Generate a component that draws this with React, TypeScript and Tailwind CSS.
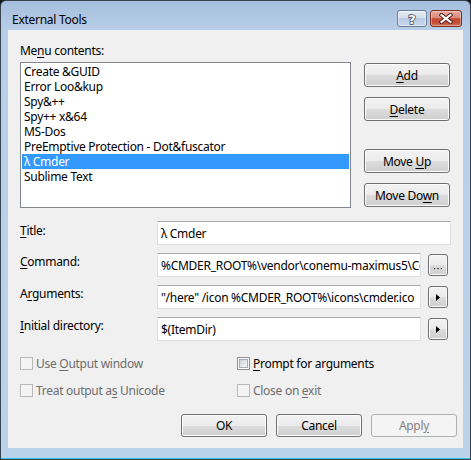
import React from "react";

function U({ children }: { children: React.ReactNode }) {
  return <span className="underline decoration-1 underline-offset-[2px]">{children}</span>;
}

function Btn({ children, className = "" }: { children: React.ReactNode; className?: string }) {
  return (
    <div
      className={
        "flex items-center justify-center rounded-[3px] border border-[#707070] bg-[linear-gradient(to_bottom,#f2f2f2_0%,#ebebeb_50%,#dddddd_50%,#cfcfcf_100%)] shadow-[inset_0_0_0_1px_#fbfbfb] text-black " +
        className
      }
    >
      <span className="whitespace-pre">{children}</span>
    </div>
  );
}

function CheckBox({ enabled, children }: { enabled: boolean; children: React.ReactNode }) {
  return (
    <div className="flex h-[15px] items-center gap-[3px]">
      {enabled ? (
        <div className="h-[13px] w-[13px] border border-[#8e8f8f] bg-[#fcfcfc] p-[1px]">
          <div className="h-full w-full border border-[#a8acb1] bg-[linear-gradient(135deg,#cfd2d6_0%,#e9eaec_60%,#f6f6f6_100%)]" />
        </div>
      ) : (
        <div className="h-[13px] w-[13px] border border-[#b9b9b9] bg-[#f4f4f4]" />
      )}
      <span className={enabled ? "text-black" : "text-[#6d6d6d]"}>{children}</span>
    </div>
  );
}

function Input({ value, className = "" }: { value: string; className?: string }) {
  return (
    <div
      className={
        "flex h-[24px] items-center overflow-hidden whitespace-nowrap border border-[#dfe1e6] border-t-[#abadb3] bg-white pl-[3px] " +
        className
      }
    >
      {value}
    </div>
  );
}

function Arrow() {
  return (
    <svg width="4" height="7" viewBox="0 0 4 7" className="block">
      <polygon points="0,0 4,3.5 0,7" fill="#000" />
    </svg>
  );
}

const items = [
  "Create &GUID",
  "Error Loo&kup",
  "Spy&++",
  "Spy++ x&64",
  "MS-Dos",
  "PreEmptive Protection - Dot&fuscator",
  "λ Cmder",
  "Sublime Text",
];

export default function App() {
  return (
    <div className="h-[460px] w-[471px] bg-[#111417] font-['Segoe_UI','Noto_Sans',sans-serif] text-[12px] leading-[15px] tracking-[-0.28px] text-black">
      <div className="flex h-full w-full flex-col rounded-t-[6px] border border-[#3a4450] bg-[linear-gradient(to_bottom,#a5bedc_0px,#b8cfe9_30px,#bbd2eb_100%)]">
        {/* Title bar */}
        <div className="flex h-[29px] items-start">
          <span className="ml-[11px] mt-[11px]">External Tools</span>
          <div className="ml-auto mr-[8px] mt-[9px] flex gap-[3px]">
            <div className="flex h-[17px] w-[30px] items-center justify-center rounded-[3px] border border-[#6b7d96] bg-[linear-gradient(to_bottom,#e4edf7_0%,#d2deec_45%,#bccde3_50%,#c6d7ec_100%)] shadow-[inset_0_0_0_1px_rgba(255,255,255,0.5)]">
              <svg width="12" height="14" viewBox="0 0 12 14">
                <text
                  x="6"
                  y="12"
                  textAnchor="middle"
                  fontFamily="DejaVu Sans, sans-serif"
                  fontWeight="bold"
                  fontSize="13"
                  fill="#fff"
                  stroke="#3d4a5c"
                  strokeWidth="1.6"
                  paintOrder="stroke"
                >
                  ?
                </text>
              </svg>
            </div>
            <div className="flex h-[17px] w-[32px] items-center justify-center rounded-[3px] border border-[#7d2c22] bg-[linear-gradient(to_bottom,#e9a99b_0%,#d98a7a_45%,#c5452f_52%,#c8503a_80%,#d7785c_100%)] shadow-[inset_0_0_0_1px_rgba(255,255,255,0.35)]">
              <svg width="14" height="11" viewBox="0 0 14 11">
                <path d="M2.5 2 L11.5 9 M11.5 2 L2.5 9" stroke="#4a1a14" strokeWidth="4" strokeLinecap="square" />
                <path d="M2.5 2 L11.5 9 M11.5 2 L2.5 9" stroke="#ffffff" strokeWidth="2.2" strokeLinecap="square" />
              </svg>
            </div>
          </div>
        </div>

        {/* Client area */}
        <div className="mx-[7px] flex h-[418px] flex-col bg-[#f0f0f0] pl-[12px]">
          <div className="mt-[13px]">
            Me<U>n</U>u contents:
          </div>

          <div className="mt-[4px] flex">
            <div className="h-[146px] w-[331px] border border-[#828790] bg-white p-[1px]">
              {items.map((it) => (
                <div
                  key={it}
                  className={
                    "h-[15px] whitespace-nowrap px-[2px] leading-[15px] " +
                    (it === "λ Cmder" ? "bg-[#3399ff] text-white" : "")
                  }
                >
                  {it}
                </div>
              ))}
            </div>
            <div className="ml-[13px] flex w-[86px] flex-col pt-[1px]">
              <Btn className="h-[24px]">
                <U>A</U>dd
              </Btn>
              <Btn className="mt-[10px] h-[24px]">
                <U>D</U>elete
              </Btn>
              <Btn className="mt-[28px] h-[24px]">
                Move <U>U</U>p
              </Btn>
              <Btn className="mt-[10px] h-[24px]">
                Move Do<U>w</U>n
              </Btn>
            </div>
          </div>

          <div className="mt-[13px] flex flex-col gap-[8px]">
            <div className="flex h-[24px]">
              <div className="w-[137px] pt-[2px]">
                <U>T</U>itle:
              </div>
              <Input value="λ Cmder" className="w-[294px]" />
            </div>
            <div className="flex h-[24px]">
              <div className="w-[137px] pt-[1px]">
                <U>C</U>ommand:
              </div>
              <Input value="%CMDER_ROOT%\vendor\conemu-maximus5\ConEmu.exe" className="w-[264px]" />
              <div className="ml-[7px] mt-[1px] flex h-[22px] w-[20px] items-end justify-center rounded-[3px] border border-[#707070] bg-[linear-gradient(to_bottom,#f2f2f2_0%,#ebebeb_50%,#dddddd_50%,#cfcfcf_100%)] pb-[5px] shadow-[inset_0_0_0_1px_#fbfbfb]">
                <svg width="8" height="2" viewBox="0 0 8 2" className="block">
                  <rect x="0" y="0" width="1.2" height="1.2" fill="#000" />
                  <rect x="3.4" y="0" width="1.2" height="1.2" fill="#000" />
                  <rect x="6.8" y="0" width="1.2" height="1.2" fill="#000" />
                </svg>
              </div>
            </div>
            <div className="flex h-[24px]">
              <div className="w-[137px] pt-[1px]">
                A<U>r</U>guments:
              </div>
              <Input value={'"/here" /icon %CMDER_ROOT%\\icons\\cmder.ico'} className="w-[264px]" />
              <Btn className="ml-[7px] mt-[1px] h-[22px] w-[20px]">
                <Arrow />
              </Btn>
            </div>
            <div className="flex h-[24px]">
              <div className="w-[137px] pt-[1px]">
                <U>I</U>nitial directory:
              </div>
              <Input value="$(ItemDir)" className="w-[264px]" />
              <Btn className="ml-[7px] mt-[1px] h-[22px] w-[20px]">
                <Arrow />
              </Btn>
            </div>
          </div>

          <div className="mt-[15px] grid grid-cols-[217px_1fr] gap-y-[12px]">
            <CheckBox enabled={false}>
              Use <U>O</U>utput window
            </CheckBox>
            <CheckBox enabled={true}>
              <U>P</U>rompt for arguments
            </CheckBox>
            <CheckBox enabled={false}>
              Treat output a<U>s</U> Unicode
            </CheckBox>
            <CheckBox enabled={false}>
              Close on <U>e</U>xit
            </CheckBox>
          </div>

          <div className="mt-[16px] flex justify-end gap-[9px] pr-[6px]">
            <Btn className="h-[23px] w-[86px] border-[#3c7fb1] shadow-[inset_0_0_0_1px_#5ed0f5]">OK</Btn>
            <Btn className="h-[23px] w-[86px]">Cancel</Btn>
            <div className="flex h-[23px] w-[86px] items-center justify-center rounded-[3px] border border-[#adb2b5] bg-[#f4f4f4] text-[#838383]">
              <span>
                Appl<U>y</U>
              </span>
            </div>
          </div>
        </div>
        <div className="flex-1" />
        <div className="h-[1px] bg-[#2ec6ea]" />
      </div>
    </div>
  );
}
